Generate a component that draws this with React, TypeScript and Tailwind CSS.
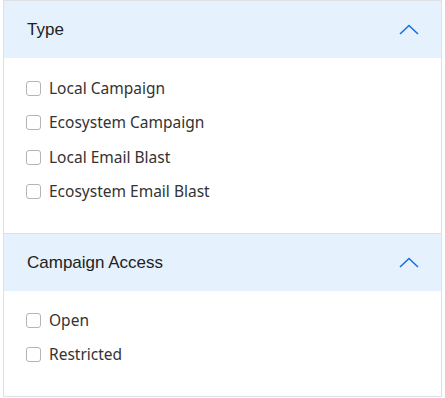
const sections = [
  { title: 'Type', options: ['Local Campaign', 'Ecosystem Campaign', 'Local Email Blast', 'Ecosystem Email Blast'] },
  { title: 'Campaign Access', options: ['Open', 'Restricted'] },
];

const ChevronUp = () => (
  <svg width="20" height="11" viewBox="0 0 20 11" fill="none" className="text-[#1a6fe0]">
    <path d="M1 10 L10 1.5 L19 10" stroke="currentColor" strokeWidth="1.6" />
  </svg>
);

export default function App() {
  return (
    <div className="w-[445px] h-[398px] bg-white pl-[3px] pr-[3px]">
      <div className="w-[439px] border border-[#dde1e6] bg-white">
        {sections.map((s, i) => (
          <div key={s.title} className={i > 0 ? 'border-t border-[#dde1e6]' : ''}>
            <div className="flex items-center justify-between h-[57px] bg-[#e5f1fd] pl-[23px] pr-[22px]">
              <span className="text-[17px] text-[#222] font-['Liberation_Sans',Arial,sans-serif]">{s.title}</span>
              <ChevronUp />
            </div>
            <div className={i === 0 ? 'pt-[13px] pb-[24px] pl-[22px]' : 'pt-[12px] pb-[24px] pl-[22px]'}>
              {s.options.map((o) => (
                <label key={o} className="flex items-center h-[34.5px] gap-[8px] font-['Noto_Sans',sans-serif] text-[15.5px] text-[#333]">
                  <span className="w-[15px] h-[15px] shrink-0 rounded-[3px] border border-[#b4b4b4] bg-white" />
                  {o}
                </label>
              ))}
            </div>
          </div>
        ))}
      </div>
    </div>
  );
}
